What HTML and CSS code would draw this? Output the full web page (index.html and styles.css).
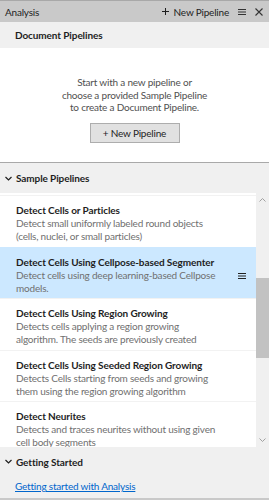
FILE: index.html
```html
<!doctype html>
<html lang="en">
  <head>
    <meta charset="utf-8" />
    <title>Analysis</title>
    <link rel="stylesheet" href="styles.css">
  </head>
  <body>
    <div class="panel">
      <div class="titlebar">
        <span class="title">Analysis</span>
        <span class="new-link">
          <svg width="7" height="7" viewBox="0 0 7 7" fill="none" stroke="#1e1e1e" stroke-width="1">
            <path d="M3.5 0v7M0 3.5h7" />
          </svg>
          New Pipeline
        </span>
        <svg class="menu-icon" width="8" height="6" viewBox="0 0 8 6" fill="#333">
          <rect x="0" y="0" width="8" height="1" />
          <rect x="0" y="2.5" width="8" height="1" />
          <rect x="0" y="5" width="8" height="1" />
        </svg>
        <svg class="close-icon" width="8" height="8" viewBox="0 0 8 8" fill="none" stroke="#333" stroke-width="1.1">
          <path d="M0.5 0.5l7 7M7.5 0.5l-7 7" />
        </svg>
      </div>

      <div class="section-head doc-head">Document Pipelines</div>

      <div class="doc-empty">
        <p>Start with a new pipeline or<br>choose a provided Sample Pipeline<br>to create a Document Pipeline.</p>
        <button class="new-btn">+ New Pipeline</button>
      </div>

      <div class="section-head sample-head">
        <svg class="chevron" width="7" height="5" viewBox="0 0 7 5" fill="none" stroke="#1e1e1e" stroke-width="1.2">
          <path d="M0.5 1l3 3 3-3" />
        </svg>
        Sample Pipelines
      </div>

      <div class="samples">
        <div class="list">
          <div class="list-top"></div>
          <div class="item">
            <div class="item-title">Detect Cells or Particles</div>
            <div class="item-desc">Detect small uniformly labeled round objects (cells, nuclei, or small particles)</div>
          </div>
          <div class="item selected">
            <div class="item-title">Detect Cells Using Cellpose-based Segmenter</div>
            <div class="item-desc">Detect cells using deep learning-based Cellpose models.</div>
            <svg class="item-menu" width="8" height="6" viewBox="0 0 8 6" fill="#222">
              <rect x="0" y="0" width="8" height="1" />
              <rect x="0" y="2.5" width="8" height="1" />
              <rect x="0" y="5" width="8" height="1" />
            </svg>
          </div>
          <div class="item">
            <div class="item-title">Detect Cells Using Region Growing</div>
            <div class="item-desc">Detects cells applying a region growing algorithm. The seeds are previously created</div>
          </div>
          <div class="item">
            <div class="item-title">Detect Cells Using Seeded Region Growing</div>
            <div class="item-desc">Detects Cells starting from seeds and growing them using the region growing algorithm</div>
          </div>
          <div class="item">
            <div class="item-title">Detect Neurites</div>
            <div class="item-desc">Detects and traces neurites without using given cell body segments</div>
          </div>
        </div>
        <div class="scrollbar">
          <svg class="arrow" width="7" height="4" viewBox="0 0 7 4" fill="none" stroke="#a0a0a0" stroke-width="1">
            <path d="M0.5 3.5l3-3 3 3" />
          </svg>
          <div class="thumb"></div>
          <svg class="arrow arrow-down" width="7" height="4" viewBox="0 0 7 4" fill="none" stroke="#a0a0a0" stroke-width="1">
            <path d="M0.5 0.5l3 3 3-3" />
          </svg>
        </div>
      </div>

      <div class="section-head start-head">
        <svg class="chevron" width="7" height="5" viewBox="0 0 7 5" fill="none" stroke="#1e1e1e" stroke-width="1.2">
          <path d="M0.5 1l3 3 3-3" />
        </svg>
        Getting Started
      </div>
      <div class="start-body">
        <a href="#" class="start-link">Getting started with Analysis</a>
      </div>
    </div>
  </body>
</html>
```

FILE: styles.css
```css
body {
  margin: 0;
  font-family: Lato, 'Open Sans', sans-serif;
  font-size: 10px;
  letter-spacing: -0.2px;
  color: #1e1e1e;
  background: #f0f0f0;
  overflow: hidden;
}

.panel {
  width: 269px;
  height: 500px;
  display: flex;
  flex-direction: column;
  border-bottom: 2px solid #c9c9c9;
  box-sizing: border-box;
}

.titlebar {
  height: 22px;
  flex: none;
  box-sizing: border-box;
  border-top: 1px solid #a8a8a8;
  background: #c9c9c9;
  display: flex;
  align-items: center;
  padding: 0 6px 0 5px;
}

.title {
  flex: 1;
}

.new-link {
  display: flex;
  align-items: center;
  gap: 5px;
}

.menu-icon {
  margin-left: 9px;
}

.close-icon {
  margin-left: 9px;
}

.section-head {
  flex: none;
  background: #f0f0f0;
  font-weight: 700;
  letter-spacing: -0.1px;
  display: flex;
  align-items: center;
  padding-left: 15px;
}

.doc-head {
  height: 26px;
}

.doc-empty {
  flex: none;
  background: #fff;
  height: 115px;
  box-sizing: border-box;
  padding-top: 28px;
  text-align: center;
  color: #505050;
  border-bottom: 1px solid #a9a9a9;
}

.doc-empty p {
  margin: 0;
  line-height: 12.5px;
}

.new-btn {
  margin-top: 9px;
  width: 90px;
  height: 20px;
  font: inherit;
  letter-spacing: inherit;
  color: #1e1e1e;
  background: #e1e1e1;
  border: 1px solid #adadad;
  padding: 0;
}

.sample-head {
  height: 30px;
  padding-left: 5px;
  gap: 4px;
}

.samples {
  flex: none;
  height: 254px;
  display: flex;
}

.list {
  width: 256px;
  flex: none;
  background: #fff;
  overflow: hidden;
}

.list-top {
  height: 2px;
}

.item {
  position: relative;
  box-sizing: border-box;
  height: 51.5px;
  overflow: hidden;
  border-top: 1px solid #f2f2f2;
  padding: 7px 34px 0 16px;
}

.item.selected {
  background: #cce8ff;
  border-top-color: #cce8ff;
}

.item-title {
  font-weight: 700;
  letter-spacing: -0.1px;
  line-height: 14px;
  white-space: nowrap;
}

.item-desc {
  color: #707070;
  line-height: 13px;
}

.item-menu {
  position: absolute;
  right: 10px;
  top: 25px;
}

.scrollbar {
  width: 13px;
  flex: none;
  display: flex;
  flex-direction: column;
  align-items: center;
}

.arrow {
  margin-top: 5px;
}

.thumb {
  margin-top: 76px;
  width: 13px;
  height: 80px;
  background: #c2c2c2;
}

.arrow-down {
  margin-top: auto;
  margin-bottom: 5px;
}

.start-head {
  height: 29px;
  padding-left: 5px;
  gap: 4px;
}

.start-body {
  flex: none;
  height: 22px;
  padding-left: 15px;
}

.start-link {
  color: #0066cc;
  line-height: 20px;
}
```
